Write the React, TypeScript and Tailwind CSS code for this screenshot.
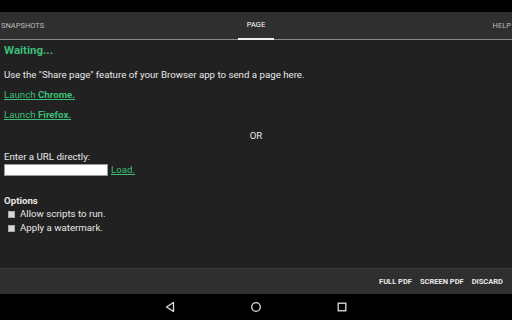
import React from "react";

const green = "text-[#3dbd78]";

export default function App() {
  return (
    <div className="w-[512px] h-[320px] flex flex-col bg-[#212121] overflow-hidden font-['Roboto',sans-serif]">
      <div className="h-[12px] bg-black shrink-0" />

      {/* tabs */}
      <div className="h-[28px] shrink-0 bg-[#2f2f2f] border-b border-[#8a8a8a] flex items-stretch text-[7.5px] text-[#bdbdbd] uppercase">
        <div className="flex-1 flex items-center pl-[1px]">Snapshots</div>
        <div className="w-[36px] flex items-center justify-center text-white border-b-2 border-[#f0f0f0] mb-[-1px]">Page</div>
        <div className="flex-1 flex items-center justify-end pr-[1px]">Help</div>
      </div>

      {/* content */}
      <div className="flex-1 px-[4px] pt-[2px] text-[9.7px] text-[#e8e8e8] flex flex-col">
        <div className={`text-[11.5px] font-bold ${green} leading-[16px]`}>Waiting...</div>
        <p className="mt-[10px] leading-[13px]">Use the "Share page" feature of your Browser app to send a page here.</p>
        <p className={`mt-[7px] leading-[13px] ${green} underline`}>
          Launch <span className="font-bold">Chrome.</span>
        </p>
        <p className={`mt-[7px] leading-[13px] ${green} underline`}>
          Launch <span className="font-bold">Firefox.</span>
        </p>
        <p className="mt-[8px] leading-[13px] text-center">OR</p>
        <p className="mt-[8px] leading-[13px]">Enter a URL directly:</p>
        <div className="flex items-center gap-[3px]">
          <input className="w-[104px] h-[12px] bg-white border border-[#999] outline-none" />
          <span className={`${green} underline leading-[13px]`}>Load.</span>
        </div>
        <p className="mt-[18px] font-bold leading-[13px]">Options</p>
        <label className="flex items-center gap-[5px] pl-[4px] leading-[14px]">
          <span className="w-[7px] h-[7px] bg-[#d8d8d8] border border-[#aaa]" />
          Allow scripts to run.
        </label>
        <label className="flex items-center gap-[5px] pl-[4px] leading-[14px]">
          <span className="w-[7px] h-[7px] bg-[#d8d8d8] border border-[#aaa]" />
          Apply a watermark.
        </label>
      </div>

      {/* action bar */}
      <div className="h-[26px] shrink-0 bg-[#2f2f2f] border-t border-[#3a3a3a] flex items-center justify-end gap-[8px] pr-[9px] text-[7.5px] font-bold text-[#e8e8e8]">
        <span>FULL PDF</span>
        <span>SCREEN PDF</span>
        <span>DISCARD</span>
      </div>

      {/* nav bar */}
      <div className="h-[26px] shrink-0 bg-black flex items-center justify-center gap-[74px]">
        <svg width="12" height="12" viewBox="0 0 12 12">
          <path d="M9.5 1.5 L2.5 6 L9.5 10.5 Z" fill="none" stroke="#e0e0e0" strokeWidth="1.3" strokeLinejoin="round" />
        </svg>
        <svg width="12" height="12" viewBox="0 0 12 12">
          <circle cx="6" cy="6" r="4.3" fill="none" stroke="#e0e0e0" strokeWidth="1.3" />
        </svg>
        <svg width="12" height="12" viewBox="0 0 12 12">
          <rect x="2.2" y="2.2" width="7.6" height="7.6" fill="none" stroke="#e0e0e0" strokeWidth="1.3" />
        </svg>
      </div>
    </div>
  );
}
